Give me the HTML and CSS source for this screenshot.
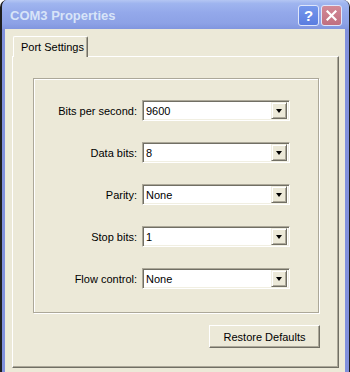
FILE: index.html
```html
<!DOCTYPE html>
<html lang="en">
<head>
  <meta charset="UTF-8" />
  <title>COM3 Properties</title>
  <link rel="stylesheet" href="styles.css">
</head>
<body>
  <div class="window">
    <div class="titlebar">
      <span class="title">COM3 Properties</span>
      <div class="caption-buttons">
        <span class="cap-btn help">?</span>
        <span class="cap-btn close">
          <svg width="11" height="11" viewBox="0 0 11 11">
            <path d="M1.5 1.5 L9.5 9.5 M9.5 1.5 L1.5 9.5" stroke="#fff" stroke-width="2.2" stroke-linecap="square"/>
          </svg>
        </span>
      </div>
    </div>

    <div class="frame">
      <div class="tabs">
        <div class="tab active">Port Settings</div>
      </div>

      <div class="panel">
        <div class="group">
          <label class="field-label">Bits per second:</label>
          <div class="combo"><span class="combo-value">9600</span><span class="combo-btn"></span></div>

          <label class="field-label">Data bits:</label>
          <div class="combo"><span class="combo-value">8</span><span class="combo-btn"></span></div>

          <label class="field-label">Parity:</label>
          <div class="combo"><span class="combo-value">None</span><span class="combo-btn"></span></div>

          <label class="field-label">Stop bits:</label>
          <div class="combo"><span class="combo-value">1</span><span class="combo-btn"></span></div>

          <label class="field-label">Flow control:</label>
          <div class="combo"><span class="combo-value">None</span><span class="combo-btn"></span></div>
        </div>

        <div class="panel-footer">
          <button class="btn">Restore Defaults</button>
        </div>
      </div>
    </div>
  </div>
</body>
</html>
```

FILE: styles.css
```css
* {
  box-sizing: border-box;
}

body {
  margin: 0;
  background: #ffffff;
  overflow: hidden;
  font-family: 'Liberation Sans', Arial, sans-serif;
  font-size: 11px;
  color: #000;
}

.window {
  width: 350px;
  height: 380px;
  border-left: 2px solid #1e1e1e;
  border-right: 1px solid #1e1e1e;
  border-radius: 7px 7px 0 0;
  background: #8190dc;
  display: flex;
  flex-direction: column;
  overflow: hidden;
}

/* title bar (inactive XP look) */
.titlebar {
  height: 29px;
  flex: none;
  display: flex;
  align-items: center;
  justify-content: space-between;
  padding: 0 7px 0 8px;
  background: linear-gradient(to bottom, #b4c6f3 0%, #9fb5ef 12%, #93a8ea 45%, #8da2e6 80%, #8196df 100%);
}

.title {
  font-weight: bold;
  font-size: 13px;
  color: #d8e4f8;
  padding-top: 1px;
}

.caption-buttons {
  display: flex;
  gap: 2px;
  padding-top: 2px;
}

.cap-btn {
  width: 21px;
  height: 21px;
  border: 1px solid #dfe6fa;
  border-radius: 3px;
  display: flex;
  align-items: center;
  justify-content: center;
}

.help {
  background: linear-gradient(to bottom, #7597ec, #5a7de0);
  color: #fff;
  font-weight: bold;
  font-size: 15px;
}

.close {
  background: linear-gradient(to bottom, #d38a97, #c06f80);
}

/* window body */
.frame {
  flex: 1;
  background: #ece9d8;
  border-left: 3px solid #8190dc;
  border-right: 4px solid #8190dc;
  padding: 7px 6px 0 7px;
}

.tabs {
  display: flex;
  padding-left: 1px;
  height: 20px;
}

.tab {
  position: relative;
  z-index: 1;
  width: 75px;
  height: 21px;
  padding: 4px 0 0 7px;
  background: #ece9d8;
  border-top: 1px solid #fff;
  border-left: 1px solid #fff;
  border-right: 1px solid #716f64;
  box-shadow: inset -1px 0 0 #aca899;
  border-radius: 2px 2px 0 0;
}

.panel {
  height: 312px;
  border-top: 1px solid #fff;
  border-left: 1px solid #fff;
  border-right: 1px solid #716f64;
  border-bottom: 1px solid #716f64;
  box-shadow: inset -1px -1px 0 #aca899;
  padding: 21px 19px 0 20px;
}

/* etched group box with the fields */
.group {
  height: 235px;
  border: 1px solid #aca899;
  box-shadow: inset 1px 1px 0 #fff, 1px 1px 0 #fff;
  padding-top: 21px;
  display: grid;
  grid-template-columns: 103px 148px;
  column-gap: 5px;
  row-gap: 21px;
  align-content: start;
}

.field-label {
  text-align: right;
  align-self: center;
}

.combo {
  height: 21px;
  display: flex;
  align-items: center;
  background: #fff;
  border-top: 1px solid #aca899;
  border-left: 1px solid #aca899;
  border-right: 1px solid #fff;
  border-bottom: 1px solid #fff;
  box-shadow: inset 1px 1px 0 #716f64, inset -1px -1px 0 #f1efe2;
  padding: 2px;
}

.combo-value {
  flex: 1;
  padding-left: 1px;
}

.combo-btn {
  width: 16px;
  height: 17px;
  background: #ece9d8;
  border-top: 1px solid #f1efe2;
  border-left: 1px solid #f1efe2;
  border-right: 1px solid #716f64;
  border-bottom: 1px solid #716f64;
  box-shadow: inset 1px 1px 0 #fff, inset -1px -1px 0 #aca899;
  display: flex;
  align-items: center;
  justify-content: center;
}

.combo-btn::after {
  content: "";
  border-left: 3.5px solid transparent;
  border-right: 3.5px solid transparent;
  border-top: 4px solid #000;
}

.panel-footer {
  display: flex;
  justify-content: flex-end;
  padding-top: 12px;
}

.btn {
  width: 111px;
  height: 23px;
  font-family: 'Liberation Sans', Arial, sans-serif;
  font-size: 11px;
  color: #000;
  background: #ece9d8;
  border-top: 1px solid #fff;
  border-left: 1px solid #fff;
  border-right: 1px solid #716f64;
  border-bottom: 1px solid #716f64;
  box-shadow: inset -1px -1px 0 #aca899;
  padding: 0;
  margin-right: -1px;
}
```
